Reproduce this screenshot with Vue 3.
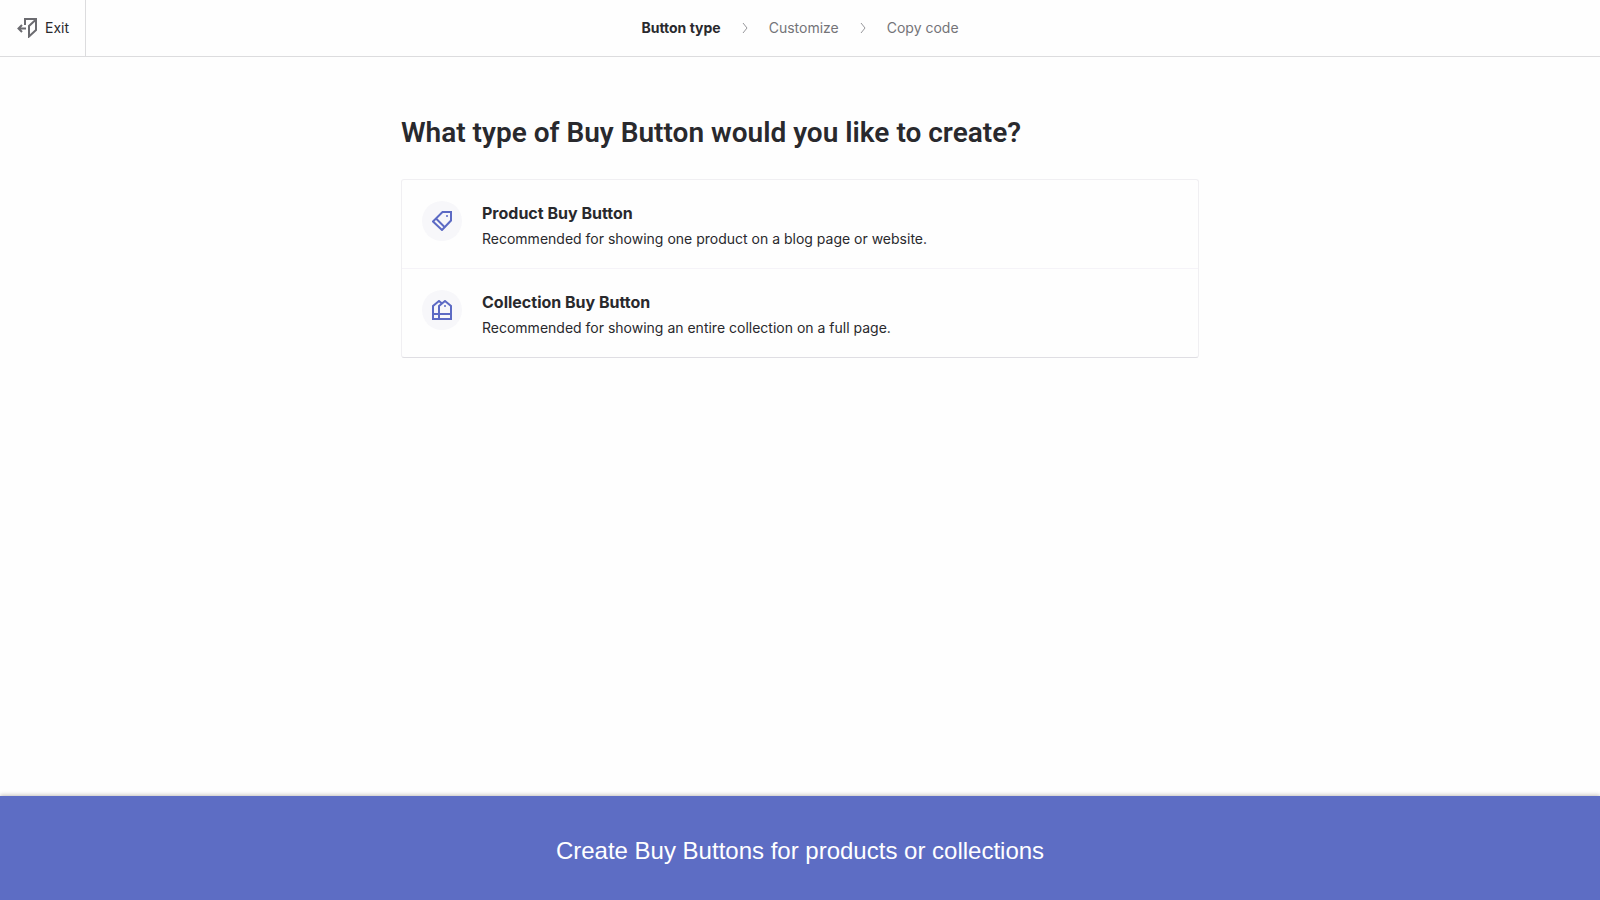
<template>
  <div class="page">
    <!-- top bar -->
    <header class="top-bar">
      <button type="button" class="exit-button">
        <svg class="exit-icon" viewBox="0 0 20 20" aria-hidden="true">
          <path d="M8 7V1H19V12L12 18.5V8L19 1.5" />
          <path d="M9 10.5H1.5M5 7L1.5 10.5L5 14" />
        </svg>
        <span>Exit</span>
      </button>
      <nav class="steps" aria-label="Progress">
        <template v-for="(step, index) in steps" :key="step">
          <svg v-if="index > 0" class="step-arrow" viewBox="0 0 8 12" aria-hidden="true">
            <path d="M2 1L6 6L2 11" />
          </svg>
          <span class="step" :class="{ active: index === currentStep }">{{ step }}</span>
        </template>
      </nav>
    </header>

    <!-- button type choices -->
    <main class="content">
      <h1 class="title">What type of Buy Button would you like to create?</h1>
      <div class="options">
        <button v-for="option in options" :key="option.id" type="button" class="option" @click="selectOption(option.id)">
          <span class="option-icon">
            <svg v-if="option.id === 'product'" viewBox="0 0 20 20" aria-hidden="true">
              <path d="M1 10.5L10.5 1H19V9.5L10 19Z" />
              <path d="M4 7.5L13 16.5" />
              <circle cx="15" cy="5" r="1" />
            </svg>
            <svg v-else viewBox="0 0 20 20" aria-hidden="true">
              <path d="M7 19V6L13 1L19 6V19H1V6L7 1L10 3.5" />
              <path d="M1 14H19" />
              <circle cx="13" cy="6" r="1" />
            </svg>
          </span>
          <span class="option-text">
            <span class="option-name">{{ option.name }}</span>
            <span class="option-description">{{ option.description }}</span>
          </span>
        </button>
      </div>
    </main>

    <!-- caption -->
    <footer class="caption">Create Buy Buttons for products or collections</footer>
  </div>
</template>

<script setup>
import { ref } from 'vue'

const steps = ['Button type', 'Customize', 'Copy code']
const currentStep = ref(0)

const options = [
  {
    id: 'product',
    name: 'Product Buy Button',
    description: 'Recommended for showing one product on a blog page or website.'
  },
  {
    id: 'collection',
    name: 'Collection Buy Button',
    description: 'Recommended for showing an entire collection on a full page.'
  }
]

const selected = ref(null)

const selectOption = (id) => {
  selected.value = id
  currentStep.value = 1
}
</script>

<style>
body {
  margin: 0;
  background: #fefefe;
}
</style>

<style scoped>
.page {
  display: flex;
  flex-direction: column;
  min-height: 100vh;
  font-family: Inter, "Liberation Sans", sans-serif;
  font-size: 14px;
  line-height: 20px;
  color: #29292d;
}

button {
  margin: 0;
  border: none;
  background: none;
  font: inherit;
  color: inherit;
  cursor: pointer;
}

svg {
  display: block;
  fill: none;
  stroke: currentColor;
}

/* top bar */
.top-bar {
  display: grid;
  grid-template-columns: 1fr auto 1fr;
  height: 56px;
  border-bottom: 1px solid #dcdcde;
}

.exit-button {
  display: flex;
  align-items: center;
  justify-self: start;
  gap: 8px;
  padding: 0 16px 0 17px;
  border-right: 1px solid #dcdcde;
}

.exit-icon {
  width: 20px;
  height: 20px;
  color: #6b6b70;
  stroke-width: 2;
}

.steps {
  display: flex;
  align-items: center;
  gap: 20px;
}

.step {
  color: #747478;
}

.step.active {
  font-weight: 700;
  color: #29292d;
}

.step-arrow {
  width: 8px;
  height: 12px;
  color: #97979b;
}

/* choices */
.content {
  flex: 1;
  box-sizing: border-box;
  width: 100%;
  max-width: 798px;
  margin: 0 auto;
  padding: 56px 0;
}

.title {
  margin: 0 0 26px;
  font-family: Roboto, Inter, sans-serif;
  font-size: 28px;
  line-height: 40px;
  font-weight: 600;
  color: #29292d;
}

.options {
  border: 1px solid #f0eff2;
  border-bottom-color: #dfdee3;
  border-radius: 3px;
}

.option {
  display: flex;
  gap: 20px;
  width: 100%;
  padding: 21px 20px 19px;
  text-align: left;
}

.option + .option {
  border-top: 1px solid #f5f3f8;
}

.option-icon {
  display: flex;
  align-items: center;
  justify-content: center;
  width: 40px;
  height: 40px;
  border-radius: 50%;
  background: #f7f7fa;
}

.option-icon svg {
  width: 20px;
  height: 20px;
  color: #5c6ac4;
  stroke-width: 2;
}

.option-icon circle {
  fill: currentColor;
  stroke: none;
}

.option-text {
  display: flex;
  flex-direction: column;
  gap: 4px;
}

.option-name {
  font-size: 16px;
  line-height: 24px;
  font-weight: 700;
}

/* caption */
.caption {
  padding: 39px 20px 33px;
  background: #5d6dc4;
  box-shadow: 0 -1px 4px rgba(60, 50, 40, 0.3);
  font-family: "Liberation Sans", sans-serif;
  font-size: 24px;
  line-height: 32px;
  text-align: center;
  color: #fff;
}
</style>
